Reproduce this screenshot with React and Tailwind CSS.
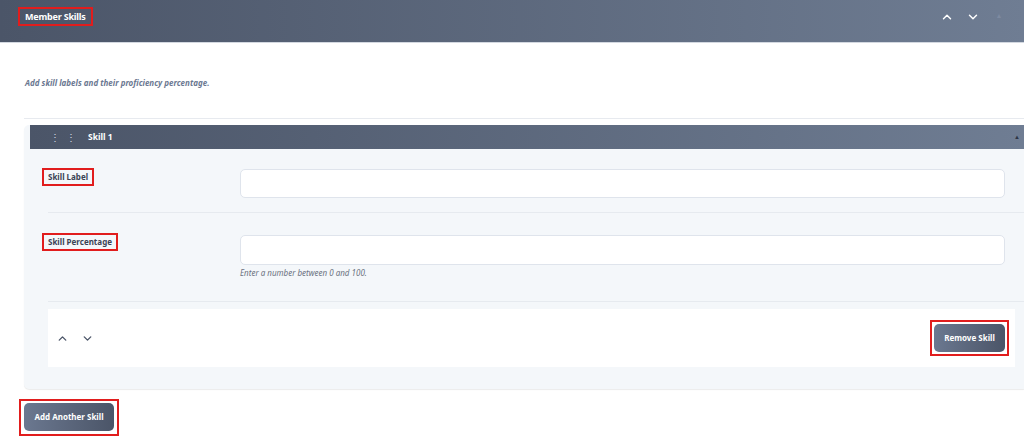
import { ChevronUp, ChevronDown } from 'lucide-react'

const FONT = { fontFamily: '"Noto Sans", "Open Sans", sans-serif' }

function Marked({ children, className = '' }) {
  return <div className={`inline-flex items-center outline-2 outline-[#e11d1d] ${className}`}>{children}</div>
}

export default function App() {
  return (
    <div className="w-[1024px] h-[442px] bg-white overflow-hidden" style={FONT}>
      {/* Header */}
      <div className="h-[43px] flex items-center justify-between pl-[20px] pr-[18px] bg-gradient-to-r from-[#4b5568] to-[#6f7d93] border-b border-[#d3d8e0]">
        <Marked className="h-[15px] text-white text-[9px] font-bold tracking-[-0.2px] leading-none px-[5px] -mt-[10px]">Member Skills</Marked>
        <div className="flex items-center gap-[12px] text-white -mt-[9px]">
          <ChevronUp size={14} strokeWidth={2.5} />
          <ChevronDown size={14} strokeWidth={2.5} />
          <span className="w-[14px] flex justify-center text-[#7d8aa0] text-[7px]">▲</span>
        </div>
      </div>

      <div className="pl-[24px]">
        <p className="pt-[36px] text-[8px] italic font-bold text-[#6b7891] leading-none pl-[1px]">Add skill labels and their proficiency percentage.</p>
        <div className="mt-[31px] border-t border-[#e7eaef]" />

        {/* Skill panel */}
        <div className="mt-[6px] bg-[#f4f7fa] rounded-l-[5px] pl-[6px] pb-[22px] shadow-[0_1px_1px_rgba(0,0,0,0.08)]">
          <div className="h-[24px] flex items-center justify-between bg-gradient-to-r from-[#4b5568] to-[#6f7d93] pl-[20px] pr-[4px]">
            <div className="flex items-center gap-[6px]">
              <span className="text-[#d5dae2] text-[10px] leading-none tracking-[6px]">⋮⋮</span>
              <span className="text-white text-[8.5px] font-bold">Skill 1</span>
            </div>
            <span className="text-[#2d3545] text-[6px]">▲</span>
          </div>

          <div className="pl-[18px]">
            <div className="flex pt-[20px] pb-[14px] border-b border-[#e6eaef]">
              <div className="w-[192px] flex items-start">
                <Marked className="h-[14px] text-[8px] font-bold text-[#3b4354] leading-none px-[4px] -ml-[4px] mt-[1px]">Skill Label</Marked>
              </div>
              <div className="w-[765px] h-[29px] bg-white border border-[#dfe4ec] rounded-[5px]" />
            </div>

            <div className="flex pt-[22px] pb-[23px] border-b border-[#e6eaef]">
              <div className="w-[192px] flex items-start">
                <Marked className="h-[14px] text-[8px] font-bold text-[#3b4354] leading-none px-[4px] -ml-[4px]">Skill Percentage</Marked>
              </div>
              <div>
                <div className="w-[765px] h-[30px] bg-white border border-[#dfe4ec] rounded-[5px]" />
                <p className="mt-[3px] text-[8px] italic text-[#6b7280] leading-[10px]">Enter a number between 0 and 100.</p>
              </div>
            </div>

            <div className="mt-[7px] mr-[9px] h-[58px] bg-white flex items-center justify-between pl-[8px] pr-[10px]">
              <div className="flex items-center gap-[12px] text-[#4b5568]">
                <ChevronUp size={13} strokeWidth={2.5} />
                <ChevronDown size={13} strokeWidth={2.5} />
              </div>
              <Marked className="p-[2px] -mr-[2px]">
                <button className="block w-[71px] h-[28px] rounded-[5px] bg-gradient-to-r from-[#6b7890] to-[#4b5568] text-white text-[8px] font-bold">Remove Skill</button>
              </Marked>
            </div>
          </div>
        </div>

        <div className="mt-[12px] -ml-[3px] flex">
          <Marked className="px-[3px] pt-[2px] pb-[3px]">
            <button className="block w-[90px] h-[28px] rounded-[5px] bg-gradient-to-r from-[#6b7890] to-[#4b5568] text-white text-[8px] font-bold">Add Another Skill</button>
          </Marked>
        </div>
      </div>
    </div>
  )
}
